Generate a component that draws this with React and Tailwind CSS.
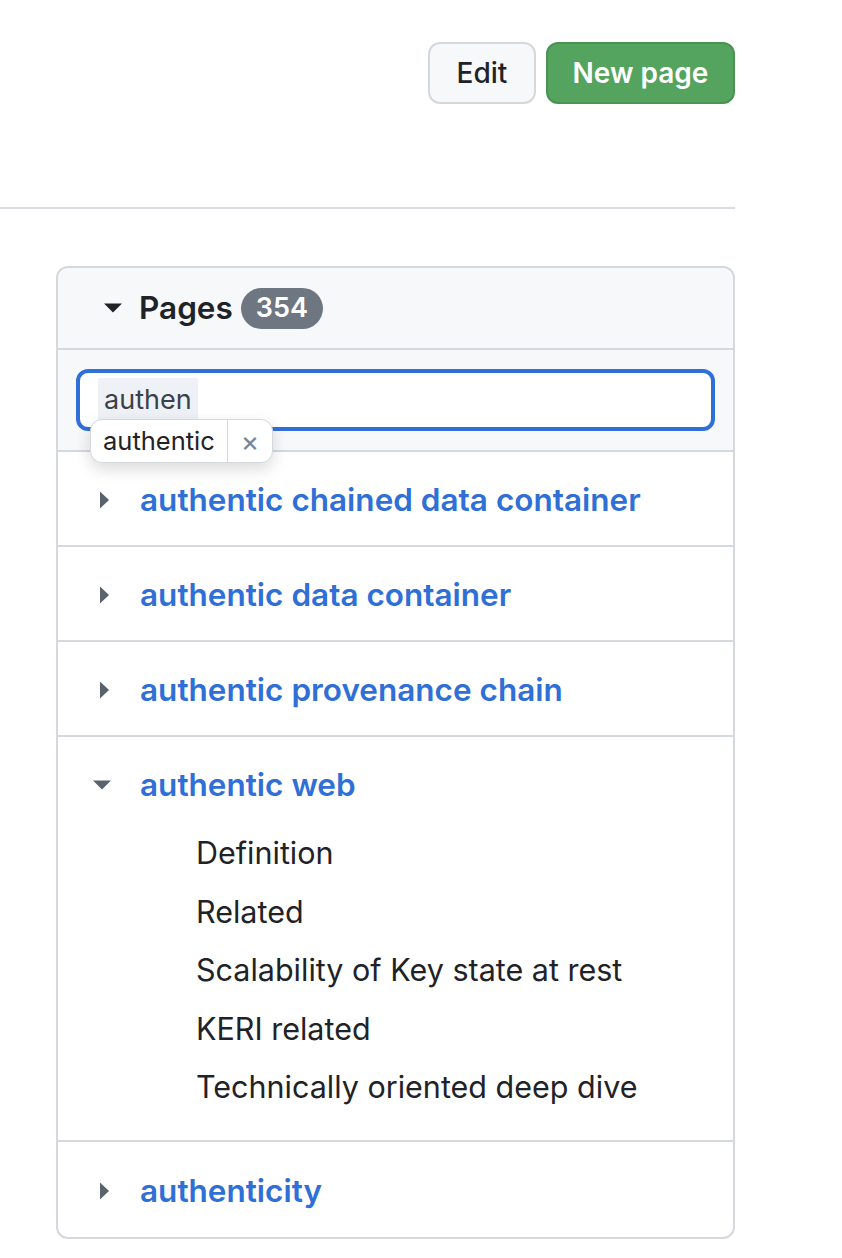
import React from 'react';

const pages = [
    { title: 'authentic chained data container' },
    { title: 'authentic data container' },
    { title: 'authentic provenance chain' },
    {
        title: 'authentic web',
        open: true,
        items: ['Definition', 'Related', 'Scalability of Key state at rest', 'KERI related', 'Technically oriented deep dive'],
    },
    { title: 'authenticity', last: true },
];

const CaretRight = () => (
    <svg width="9" height="18" viewBox="0 0 9 18" className="fill-[#59636e]">
        <path d="M0 0.5 L9 9 L0 17.5 Z" />
    </svg>
);

const CaretDown = ({ className = 'fill-[#59636e]' }) => (
    <svg width="18" height="10" viewBox="0 0 18 10" className={className}>
        <path d="M0 0.5 L18 0.5 L9 9.5 Z" />
    </svg>
);

const App = () => {
    return (
        <div className="w-[842px] h-[1258px] bg-white font-['Inter',sans-serif] text-[#1f2328]">
            <div className="w-[735px]">
                <div className="flex justify-end gap-[10px] pt-[42px]">
                    <button className="h-[62px] w-[108px] rounded-[12px] border-2 border-[#d5d8dc] bg-[#f6f8fa] text-[28px] font-medium">
                        Edit
                    </button>
                    <button className="h-[62px] w-[189px] rounded-[12px] border-2 border-[#4a9353] bg-[#54a35f] text-[28px] font-semibold text-white">
                        New page
                    </button>
                </div>
                <div className="mt-[103px] h-[2px] bg-[#d8dbe0]"></div>
            </div>

            <div className="ml-[56px] mt-[57px] w-[679px] rounded-[12px] border-2 border-[#d5d8dc] overflow-visible">
                <div className="flex h-[82px] items-center rounded-t-[12px] bg-[#f6f8fa] border-b-2 border-[#d5d8dc] pl-[46px]">
                    <CaretDown className="fill-[#1f2328]" />
                    <span className="ml-[17px] text-[31.5px] font-semibold">Pages</span>
                    <span className="ml-[8px] flex h-[41px] items-center rounded-full bg-[#6e7781] px-[15px] text-[27px] font-semibold text-white">
                        354
                    </span>
                </div>
                <div className="relative bg-[#f6f8fa] border-b-2 border-[#d5d8dc] px-[18px] py-[19px]">
                    <div className="flex h-[62px] items-center rounded-[12px] border-[4px] border-[#2f6fd8] bg-white pl-[18px]">
                        <span className="bg-[#eef1f6] px-[6px] py-[2px] text-[27px] text-[#3a4149]">authen</span>
                    </div>
                    <div className="absolute left-[32px] top-[69px] flex h-[44px] items-center rounded-[12px] border border-[#d5d8dc] bg-white shadow-[0_6px_16px_rgba(0,0,0,0.15)]">
                        <span className="px-[12px] text-[25.5px] text-[#1f2328]">authentic</span>
                        <span className="flex h-full items-center border-l border-[#d5d8dc] px-[13px] text-[28px] text-[#7d858e]">×</span>
                    </div>
                </div>
                {pages.map((p, i) => (
                    <div key={i} className={p.last ? '' : 'border-b-2 border-[#d5d8dc]'}>
                        <div className={`flex items-center pt-[3px] ${p.last ? 'h-[95px]' : 'h-[93px]'}`}>
                            {p.open ? (
                                <div className="ml-[35px] mr-[29px] flex w-[18px]">
                                    <CaretDown />
                                </div>
                            ) : (
                                <div className="ml-[42px] mr-[31px] flex w-[9px]">
                                    <CaretRight />
                                </div>
                            )}
                            <span className="text-[31.5px] font-semibold text-[#2f6fd6]">{p.title}</span>
                        </div>
                        {p.items && (
                            <ul className="-mt-[6px] pb-[23px] pl-[138px]">
                                {p.items.map((it) => (
                                    <li key={it} className="h-[58.5px] text-[30.5px] leading-[58.5px]">
                                        {it}
                                    </li>
                                ))}
                            </ul>
                        )}
                    </div>
                ))}
            </div>
        </div>
    );
};

export default App;
